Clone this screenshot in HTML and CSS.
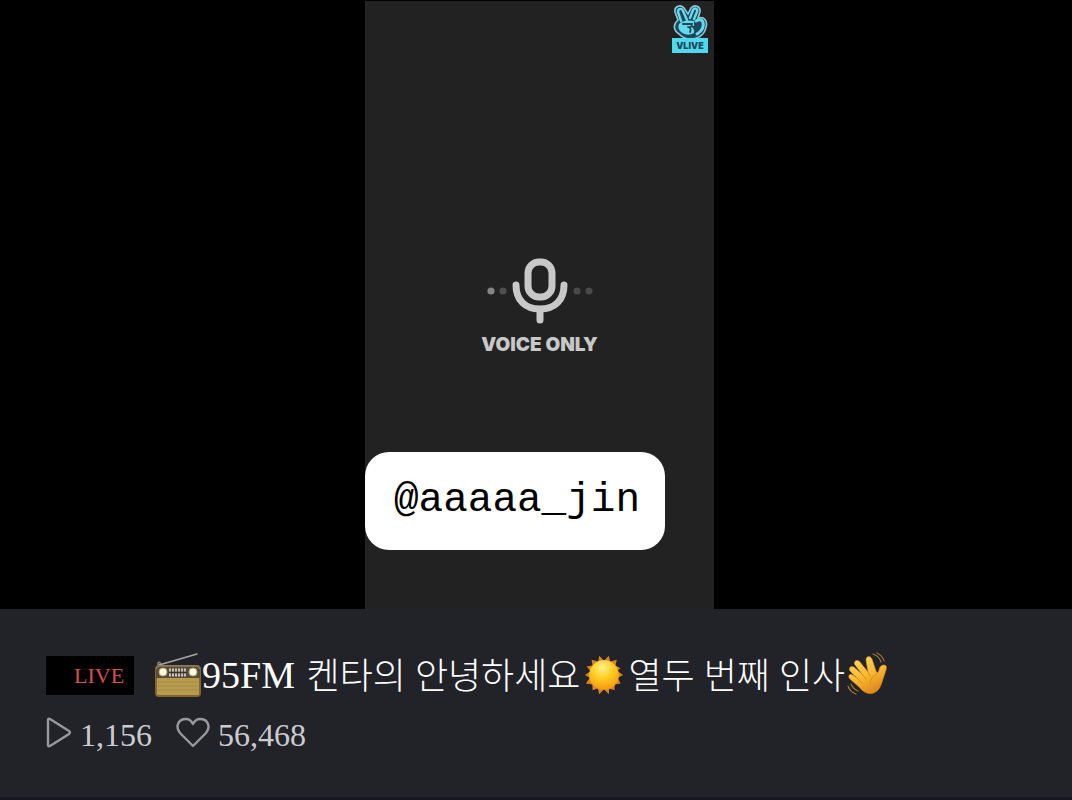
FILE: index.html
```html
<!DOCTYPE html>
<html lang="ko">
<head>
    <meta charset="UTF-8">
    <meta name="viewport" content="width=device-width, initial-scale=1.0">
    <title>VLIVE</title>
    <link rel="stylesheet" href="styles.css">
</head>
<body>

<main class="player">
    <div class="screen">
        <svg class="logo" viewBox="0 0 40 50" role="img" aria-label="VLIVE">
            <path d="M9 30 C3 26 3 20 8 16 L5 8 C4 2 11 0 14 4 L18 10 L21 4 C24 0 31 2 30 8 L28 14 C34 12 38 17 36 23 C35 30 29 35 20 35 C15 35 12 33 9 30 Z" fill="#21465a" stroke="#8ccbd8" stroke-width="1.6"/>
            <path d="M11 17 L8 8 C8 4 12 4 13 7 L17 16 M20 14 L23 6 C25 3 28 5 27 8 L24 15" fill="none" stroke="#62dcef" stroke-width="2.4" stroke-linecap="round" stroke-linejoin="round"/>
            <path d="M9 20 Q14 15 24 17 V22 H20 Q25 24 24 29 Q17 33 11 28 Q7 24 9 20 Z" fill="#62dcef"/>
            <path d="M26 17 Q31 14 33 18 Q35 25 27 30" fill="none" stroke="#62dcef" stroke-width="3" stroke-linecap="round"/>
            <path d="M13 20 H22 Q22 24 18 23 M18 23 Q22 24 20 28" fill="none" stroke="#21465a" stroke-width="1.8" stroke-linecap="round"/>
            <rect x="2" y="34" width="36" height="15" fill="#4fd9ef"/>
            <text class="logo-text" x="20" y="45" text-anchor="middle">VLIVE</text>
        </svg>

        <div class="voice">
            <svg class="mic" viewBox="0 0 106 68" aria-hidden="true">
                <circle cx="4" cy="34" r="3.6" fill="#858585"/>
                <circle cx="16" cy="34" r="3.6" fill="#4f4f4f"/>
                <circle cx="90" cy="34" r="3.6" fill="#4a4a4a"/>
                <circle cx="102" cy="34" r="3.6" fill="#4a4a4a"/>
                <g fill="none" stroke="#c8c8c8" stroke-width="7" stroke-linecap="round">
                    <rect x="41" y="5" width="24" height="35" rx="11"/>
                    <path d="M29 28 C29 43 38 52 53 52 C68 52 77 43 77 28 M53 52 V63"/>
                </g>
            </svg>
            <p class="voice-text">VOICE ONLY</p>
        </div>

        <div class="handle">@aaaaa_jin</div>
    </div>
</main>

<section class="info">
    <div class="title-row">
        <span class="live">LIVE</span>
        <h1 class="title">
            <svg class="radio" viewBox="0 0 48 46" role="img" aria-label="라디오">
                <path d="M5 13 L43 2" stroke="#aaa7a2" stroke-width="1.4" stroke-linecap="round"/>
                <path d="M4 14 V11 Q5 9 7 12" fill="none" stroke="#8b867c" stroke-width="1.5"/>
                <rect x="1" y="13" width="46" height="32" rx="4" fill="#85652c"/>
                <path d="M2 26 V17 Q2 14 5 14 H43 Q46 14 46 17 V26 Z" fill="#594d3a"/>
                <path d="M2 17 Q3 14 6 14 H42 Q45 14 46 17" fill="none" stroke="#9b9078"/>
                <rect x="3" y="26" width="42" height="17" rx="1" fill="#b69a50"/>
                <path d="M4 30 H44 M4 34 H44 M4 38 H44" stroke="#a88c43"/>
                <path d="M15 18 H33 M15 23 H33" stroke="#c4c2b8" stroke-width="3" stroke-dasharray="2 1"/>
                <path d="M15 20.5 H33" stroke="#39342c"/>
                <circle cx="9" cy="20" r="4" fill="#fff8da" stroke="#b8aa85"/>
                <circle cx="39" cy="20" r="4" fill="#fff8da" stroke="#b8aa85"/>
            </svg><span class="latin">95FM </span><span class="hangul">켄타의 안녕하세요</span><svg class="sun" viewBox="0 0 46 46" role="img" aria-label="해">
                <defs>
                    <radialGradient id="sun-fill" cx="45%" cy="25%" r="75%">
                        <stop offset="0" stop-color="#fff08a"/>
                        <stop offset=".5" stop-color="#ffcc20"/>
                        <stop offset="1" stop-color="#f49a10"/>
                    </radialGradient>
                </defs>
                <path d="M28 3 L29.5 9 L36.4 7 L35 13 L40.3 16 L36.6 18.6 L43 23 L37.5 26 L40.3 32 L34.2 33 L34 39 L28.5 37 L28 43 L23 38 L18 43 L16.5 37 L11 39 L10.8 33 L4 32 L8.2 26 L3 23 L9 19 L4.7 14 L11 13 L10 7 L17 9 L18 3 L23 8 Z" fill="#d98228"/>
                <circle cx="23" cy="23" r="15.5" fill="url(#sun-fill)"/>
            </svg><span class="hangul">열두 번째 인사</span><svg class="wave" viewBox="0 0 42 46" role="img" aria-label="안녕">
                <defs>
                    <linearGradient id="hand-fill" x1="0" y1="0" x2=".5" y2="1">
                        <stop offset="0" stop-color="#ffdc70"/>
                        <stop offset=".6" stop-color="#fbb832"/>
                        <stop offset="1" stop-color="#df8b19"/>
                    </linearGradient>
                </defs>
                <path d="M12 35 L3 27 C0 24 3 21 6 23 L11 27 L3 19 C1 15 5 13 8 16 L15 22 L8 13 C6 9 10 7 13 10 L21 20 L19 8 C19 4 23 3 25 7 L29 19 Q31 23 32 18 Q33 13 37 13 C41 13 39 18 38 21 L34 33 C30 43 20 45 12 35 Z" fill="url(#hand-fill)" stroke="#d88b20" stroke-width=".6"/>
                <path d="M11 27 L15 31 M15 22 L19 27 M21 20 L23 24 M30 22 Q23 25 23 32" fill="none" stroke="#d98d24" stroke-linecap="round"/>
                <path d="M26 2 Q32 4 34 10 M30 1 Q36 4 37 9 M1 34 Q3 40 9 42 M4 32 Q6 37 11 39" fill="none" stroke="#a17634" stroke-width="1.2" stroke-linecap="round"/>
            </svg>
        </h1>
    </div>

    <div class="stats">
        <span class="stat">
            <svg class="play" viewBox="0 0 26 32" role="img" aria-label="재생수">
                <path d="M2 3 Q2 1 4 2 L23 14 Q25 15 23 17 L4 29 Q2 30 2 28 Z" fill="none" stroke="#98999d" stroke-width="2.4"/>
            </svg>
            1,156
        </span>
        <span class="stat">
            <svg class="heart" viewBox="0 0 34 32" role="img" aria-label="좋아요">
                <path d="M17 29 L4 16 C-1 10 2 2 10 2 C14 2 16 5 17 7 C18 5 20 2 24 2 C32 2 35 10 30 16 Z" fill="none" stroke="#98999d" stroke-width="2.4" stroke-linejoin="round"/>
            </svg>
            56,468
        </span>
    </div>
</section>

</body>
</html>
```

FILE: styles.css
```css
* {
    box-sizing: border-box;
}
body {
    display: flex;
    flex-direction: column;
    min-height: 100vh;
    margin: 0;
    background-color: #000;
    font-family: "Liberation Serif", "Noto Sans CJK KR", serif;
}
.player {
    display: grid;
    flex: 1;
    grid-template-columns: 365fr 349fr 358fr;
    padding-top: 1px;
}
.screen {
    position: relative;
    grid-column: 2;
    display: flex;
    flex-direction: column;
    align-items: center;
    padding: 256px 0 58px;
    background-color: #222;
}
.logo {
    position: absolute;
    top: 3px;
    right: 4px;
    width: 40px;
    height: 50px;
}
.logo-text {
    font: 900 9px "Inter", sans-serif;
    fill: #21465a;
}
.voice {
    display: flex;
    flex-direction: column;
    align-items: center;
    gap: 8px;
}
.mic {
    width: 106px;
    height: 68px;
}
.voice-text {
    margin: 0;
    color: #c8c8c8;
    font: 900 19px/24px "Inter", sans-serif;
}
.handle {
    align-self: flex-start;
    margin-top: 95px;
    padding: 24px 25px 26px 29px;
    border-radius: 24px;
    background-color: #fff;
    color: #000;
    font: 41px/48px "Liberation Mono", monospace;
}
.info {
    padding: 40px 46px;
    border-bottom: 3px solid #17151d;
    background-color: #222328;
    color: #fff;
}
.title-row {
    display: flex;
    align-items: center;
    gap: 20px;
}
.live {
    padding: 4px 10px 3px 28px;
    background-color: #000;
    color: #d6504b;
    font-size: 22px;
    line-height: 32px;
}
.title {
    display: flex;
    align-items: center;
    margin: 0;
    font-size: 36px;
    font-weight: 300;
    line-height: 48px;
    white-space: pre;
}
.latin {
    font-size: 38px;
}
.hangul {
    padding: 4px 2px 0;
}
.radio {
    width: 48px;
    height: 46px;
}
.sun {
    width: 44px;
    height: 46px;
}
.wave {
    width: 42px;
    height: 46px;
}
.stats {
    display: flex;
    gap: 24px;
    margin-top: 12px;
    color: #cbccd0;
    font-size: 32px;
    line-height: 44px;
}
.stat {
    display: flex;
    align-items: center;
    gap: 8px;
}
.play,
.heart {
    height: 32px;
    margin-bottom: 4px;
}
.play {
    width: 26px;
}
.heart {
    width: 34px;
}
```
